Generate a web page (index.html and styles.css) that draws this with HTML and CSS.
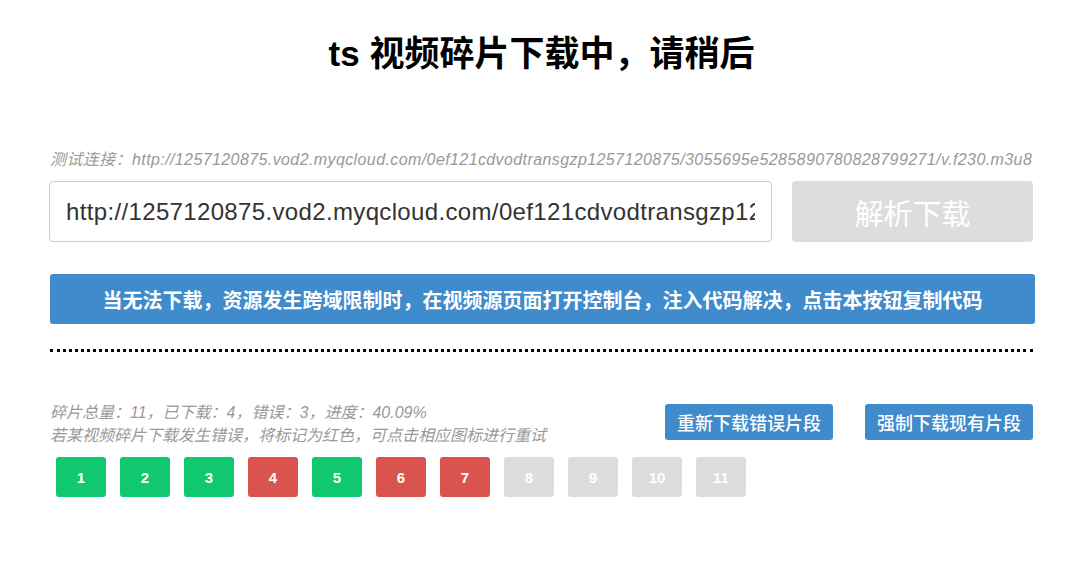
FILE: index.html
```html
<!DOCTYPE html>
<html lang="zh-CN">
<head>
<meta charset="utf-8">
<title>ts 视频碎片下载</title>
<link rel="stylesheet" href="styles.css">
</head>
<body>
<div class="page">
  <h1 class="title">ts 视频碎片下载中，请稍后</h1>
  <p class="test-link">测试连接：http://1257120875.vod2.myqcloud.com/0ef121cdvodtransgzp1257120875/3055695e5285890780828799271/v.f230.m3u8</p>
  <div class="input-row">
    <input class="url-input" type="text" value="http://1257120875.vod2.myqcloud.com/0ef121cdvodtransgzp1257120875/3055695e5285890780828799271/v.f230.m3u8">
    <button class="parse-btn">解析下载</button>
  </div>
  <button class="copy-bar">当无法下载，资源发生跨域限制时，在视频源页面打开控制台，注入代码解决，点击本按钮复制代码</button>
  <div class="divider"></div>
  <div class="stats-row">
    <div class="stats-text">
      <div>碎片总量：11，已下载：4，错误：3，进度：40.09%</div>
      <div>若某视频碎片下载发生错误，将标记为红色，可点击相应图标进行重试</div>
    </div>
    <div class="actions">
      <button class="action-btn">重新下载错误片段</button>
      <button class="action-btn">强制下载现有片段</button>
    </div>
  </div>
  <div class="segments">
    <span class="seg ok">1</span>
    <span class="seg ok">2</span>
    <span class="seg ok">3</span>
    <span class="seg err">4</span>
    <span class="seg ok">5</span>
    <span class="seg err">6</span>
    <span class="seg err">7</span>
    <span class="seg wait">8</span>
    <span class="seg wait">9</span>
    <span class="seg wait">10</span>
    <span class="seg wait">11</span>
  </div>
</div>
</body>
</html>
```

FILE: styles.css
```css
* { box-sizing: border-box; }

body {
  margin: 0;
  background: #fff;
  font-family: "Liberation Sans", "Noto Sans CJK SC", sans-serif;
  color: #333;
}

.page {
  padding: 0 50px;
}

.title {
  margin: 34px 0 0;
  text-align: center;
  font-size: 35px;
  line-height: 40px;
  font-weight: bold;
  color: #000;
}

.test-link {
  margin: 76px 0 0;
  font-size: 16px;
  line-height: 20px;
  letter-spacing: 0.4px;
  font-style: italic;
  color: #999;
  white-space: nowrap;
  overflow: hidden;
}

.input-row {
  display: flex;
  gap: 20px;
  margin-top: 11px;
  margin-left: -1px;
}

.url-input {
  flex: 1;
  height: 61px;
  padding: 0 16px;
  border: 1px solid #ccc;
  border-radius: 4px;
  font-family: "Liberation Sans", "Noto Sans CJK SC", sans-serif;
  font-size: 24px;
  letter-spacing: 0.35px;
  color: #333;
  outline: none;
}

.parse-btn {
  width: 241px;
  height: 61px;
  border: none;
  border-radius: 4px;
  background: #ddd;
  color: #fff;
  font-family: "Liberation Sans", "Noto Sans CJK SC", sans-serif;
  font-size: 29px;
}

.copy-bar {
  display: block;
  width: 985px;
  height: 50px;
  margin-top: 32px;
  border: none;
  border-radius: 3px;
  background: #3f8bcb;
  color: #fff;
  font-family: "Liberation Sans", "Noto Sans CJK SC", sans-serif;
  font-size: 20px;
  font-weight: bold;
}

.divider {
  margin-top: 25px;
  border-top: 3px dotted #000;
}

.stats-row {
  display: flex;
  justify-content: space-between;
  align-items: flex-start;
  margin-top: 49px;
}

.stats-text {
  font-size: 16px;
  line-height: 23px;
  font-style: italic;
  color: #999;
}

.actions {
  display: flex;
  gap: 32px;
  margin-top: 3px;
}

.action-btn {
  width: 168px;
  height: 36px;
  border: none;
  border-radius: 3px;
  background: #3f8bcb;
  color: #fff;
  font-family: "Liberation Sans", "Noto Sans CJK SC", sans-serif;
  font-size: 18px;
  font-weight: 500;
}

.segments {
  display: flex;
  gap: 14px;
  margin-top: 10px;
  padding-left: 6px;
}

.seg {
  width: 50px;
  height: 40px;
  border-radius: 3px;
  display: flex;
  align-items: center;
  justify-content: center;
  color: #fff;
  font-size: 15px;
  font-weight: bold;
}

.seg.ok { background: #10c96f; }
.seg.err { background: #d9534f; }
.seg.wait { background: #ddd; }
```
